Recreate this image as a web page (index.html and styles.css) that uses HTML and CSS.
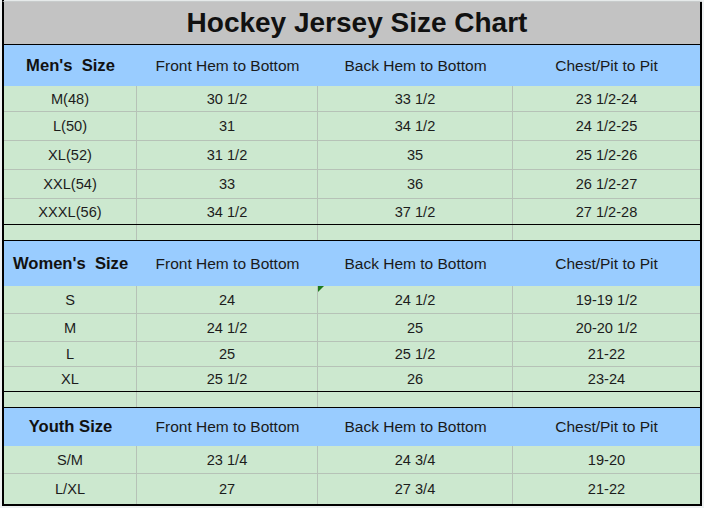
FILE: index.html
```html
<!DOCTYPE html>
<html>
<head>
<meta charset="utf-8">
<link rel="stylesheet" href="styles.css">
</head>
<body>
<div class="topstrip"></div>
<div class="sheet">
  <div class="title">Hockey Jersey Size Chart</div>

  <div class="row head h41">
    <div class="c b">Men's&nbsp;&nbsp;Size</div><div class="c">Front Hem to Bottom</div><div class="c">Back Hem to Bottom</div><div class="c">Chest/Pit to Pit</div>
  </div>
  <div class="row data" style="height:26px"><div class="c">M(48)</div><div class="c">30 1/2</div><div class="c">33 1/2</div><div class="c">23 1/2-24</div></div>
  <div class="row data" style="height:29px"><div class="c">L(50)</div><div class="c">31</div><div class="c">34 1/2</div><div class="c">24 1/2-25</div></div>
  <div class="row data" style="height:29px"><div class="c">XL(52)</div><div class="c">31 1/2</div><div class="c">35</div><div class="c">25 1/2-26</div></div>
  <div class="row data" style="height:29px"><div class="c">XXL(54)</div><div class="c">33</div><div class="c">36</div><div class="c">26 1/2-27</div></div>
  <div class="row data last" style="height:26px"><div class="c">XXXL(56)</div><div class="c">34 1/2</div><div class="c">37 1/2</div><div class="c">27 1/2-28</div></div>
  <div class="row data blank"><div class="c"></div><div class="c"></div><div class="c"></div><div class="c"></div></div>

  <div class="row head h45">
    <div class="c b">Women's&nbsp;&nbsp;Size</div><div class="c">Front Hem to Bottom</div><div class="c">Back Hem to Bottom</div><div class="c">Chest/Pit to Pit</div>
  </div>
  <div class="row data" style="height:28px"><div class="c">S</div><div class="c">24</div><div class="c flag">24 1/2</div><div class="c">19-19 1/2</div></div>
  <div class="row data" style="height:28px"><div class="c">M</div><div class="c">24 1/2</div><div class="c">25</div><div class="c">20-20 1/2</div></div>
  <div class="row data" style="height:25px"><div class="c">L</div><div class="c">25</div><div class="c">25 1/2</div><div class="c">21-22</div></div>
  <div class="row data last" style="height:25px"><div class="c">XL</div><div class="c">25 1/2</div><div class="c">26</div><div class="c">23-24</div></div>
  <div class="row data blank"><div class="c"></div><div class="c"></div><div class="c"></div><div class="c"></div></div>

  <div class="row head h38">
    <div class="c b">Youth Size</div><div class="c">Front Hem to Bottom</div><div class="c">Back Hem to Bottom</div><div class="c">Chest/Pit to Pit</div>
  </div>
  <div class="row data" style="height:28px"><div class="c">S/M</div><div class="c">23 1/4</div><div class="c">24 3/4</div><div class="c">19-20</div></div>
  <div class="row data end" style="height:30px"><div class="c">L/XL</div><div class="c">27</div><div class="c">27 3/4</div><div class="c">21-22</div></div>
</div>
</body>
</html>
```
FILE: styles.css
```css
html, body {
  margin: 0;
  padding: 0;
}
body {
  background: #eef1f2;
  width: 704px;
  height: 508px;
  overflow: hidden;
  font-family: "Liberation Sans", Arial, sans-serif;
  color: #1c1c1c;
}
.topstrip {
  height: 2px;
  margin-left: 2px;
  border-left: 2px solid #000;
  box-sizing: border-box;
  width: 700px;
  background: #e6eaea;
  border-bottom: 1px solid #c8cccc;
  height: 2px;
}
.sheet {
  margin-left: 2px;
  width: 700px;
  box-sizing: border-box;
  border-left: 2px solid #000;
  border-right: 2px solid #000;
  border-bottom: 2px solid #000;
}
.title {
  height: 43px;
  box-sizing: border-box;
  background: #c3c3c3;
  border-bottom: 1px solid #000;
  font-weight: bold;
  font-size: 28px;
  display: flex;
  align-items: center;
  justify-content: center;
  padding-left: 10px;
  padding-bottom: 1px;
  color: #111;
}
.row {
  display: grid;
  grid-template-columns: 133px 181px 195px 187px;
  box-sizing: border-box;
}
.c {
  display: flex;
  align-items: center;
  justify-content: center;
  white-space: nowrap;
  box-sizing: border-box;
  position: relative;
}
.head {
  background: #99ccff;
  font-size: 15.5px;
  color: #1a1a1a;
}
.head .b {
  font-weight: bold;
  font-size: 16.6px;
  color: #111;
}
.h41 { height: 41px; }
.h45 { height: 45px; }
.h38 { height: 38px; }
.data {
  background: #cce8cf;
  font-size: 14.6px;
  border-bottom: 1px solid #b6c2b7;
}
.data .c {
  border-right: 1px solid #b6c2b7;
}
.data .c:last-child {
  border-right: none;
}
.data.last {
  border-bottom: 1px solid #000;
}
.data.blank {
  height: 16px;
  border-bottom: 1px solid #000;
}
.data.end {
  border-bottom: none;
}
.flag::before {
  content: "";
  position: absolute;
  left: 0;
  top: 0;
  width: 0;
  height: 0;
  border-top: 6px solid #1f7a1f;
  border-right: 6px solid transparent;
}
```
